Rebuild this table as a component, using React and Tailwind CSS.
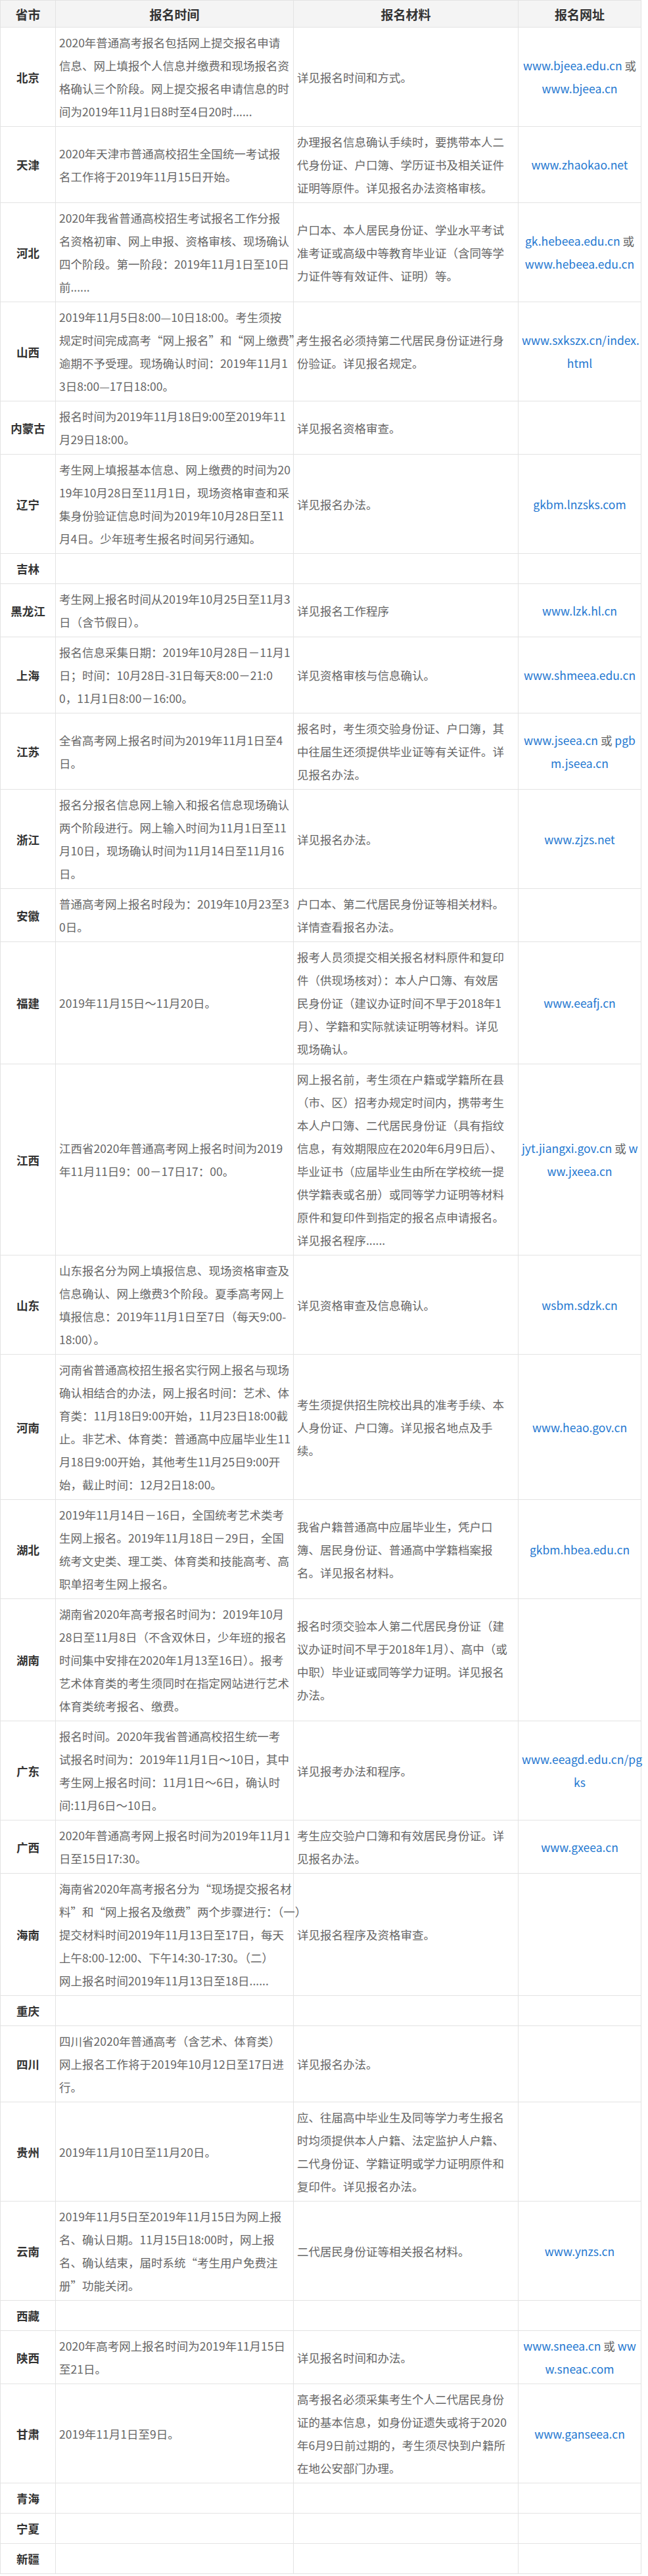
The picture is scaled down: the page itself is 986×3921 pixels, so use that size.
const rows = [
  {
    p: "北京",
    time: ["2020年普通高考报名包括网上提交报名申请", "信息、网上填报个人信息并缴费和现场报名资", "格确认三个阶段。网上提交报名申请信息的时", "间为2019年11月1日8时至4日20时......"],
    mat: ["详见报名时间和方式。"],
    url: ["www.bjeea.edu.cn 或", "www.bjeea.cn"],
  },
  {
    p: "天津",
    time: ["2020年天津市普通高校招生全国统一考试报", "名工作将于2019年11月15日开始。"],
    mat: ["办理报名信息确认手续时，要携带本人二", "代身份证、户口簿、学历证书及相关证件", "证明等原件。详见报名办法资格审核。"],
    url: ["www.zhaokao.net"],
  },
  {
    p: "河北",
    time: ["2020年我省普通高校招生考试报名工作分报", "名资格初审、网上申报、资格审核、现场确认", "四个阶段。第一阶段：2019年11月1日至10日", "前......"],
    mat: ["户口本、本人居民身份证、学业水平考试", "准考证或高级中等教育毕业证（含同等学", "力证件等有效证件、证明）等。"],
    url: ["gk.hebeea.edu.cn 或", "www.hebeea.edu.cn"],
  },
  {
    p: "山西",
    time: ["2019年11月5日8:00—10日18:00。考生须按", "规定时间完成高考“网上报名”和“网上缴费”，", "逾期不予受理。现场确认时间：2019年11月1", "3日8:00—17日18:00。"],
    mat: ["考生报名必须持第二代居民身份证进行身", "份验证。详见报名规定。"],
    url: ["www.sxkszx.cn/index.", "html"],
  },
  {
    p: "内蒙古",
    time: ["报名时间为2019年11月18日9:00至2019年11", "月29日18:00。"],
    mat: ["详见报名资格审查。"],
    url: [],
  },
  {
    p: "辽宁",
    time: ["考生网上填报基本信息、网上缴费的时间为20", "19年10月28日至11月1日，现场资格审查和采", "集身份验证信息时间为2019年10月28日至11", "月4日。少年班考生报名时间另行通知。"],
    mat: ["详见报名办法。"],
    url: ["gkbm.lnzsks.com"],
  },
  { p: "吉林", time: [], mat: [], url: [] },
  {
    p: "黑龙江",
    time: ["考生网上报名时间从2019年10月25日至11月3", "日（含节假日）。"],
    mat: ["详见报名工作程序"],
    url: ["www.lzk.hl.cn"],
  },
  {
    p: "上海",
    time: ["报名信息采集日期：2019年10月28日－11月1", "日；时间：10月28日-31日每天8:00－21:0", "0，11月1日8:00－16:00。"],
    mat: ["详见资格审核与信息确认。"],
    url: ["www.shmeea.edu.cn"],
  },
  {
    p: "江苏",
    time: ["全省高考网上报名时间为2019年11月1日至4", "日。"],
    mat: ["报名时，考生须交验身份证、户口簿，其", "中往届生还须提供毕业证等有关证件。详", "见报名办法。"],
    url: ["www.jseea.cn 或 pgb", "m.jseea.cn"],
  },
  {
    p: "浙江",
    time: ["报名分报名信息网上输入和报名信息现场确认", "两个阶段进行。网上输入时间为11月1日至11", "月10日，现场确认时间为11月14日至11月16", "日。"],
    mat: ["详见报名办法。"],
    url: ["www.zjzs.net"],
  },
  {
    p: "安徽",
    time: ["普通高考网上报名时段为：2019年10月23至3", "0日。"],
    mat: ["户口本、第二代居民身份证等相关材料。", "详情查看报名办法。"],
    url: [],
  },
  {
    p: "福建",
    time: ["2019年11月15日～11月20日。"],
    mat: ["报考人员须提交相关报名材料原件和复印", "件（供现场核对）：本人户口簿、有效居", "民身份证（建议办证时间不早于2018年1", "月）、学籍和实际就读证明等材料。详见", "现场确认。"],
    url: ["www.eeafj.cn"],
  },
  {
    p: "江西",
    time: ["江西省2020年普通高考网上报名时间为2019", "年11月11日9：00－17日17：00。"],
    mat: ["网上报名前，考生须在户籍或学籍所在县", "（市、区）招考办规定时间内，携带考生", "本人户口簿、二代居民身份证（具有指纹", "信息，有效期限应在2020年6月9日后）、", "毕业证书（应届毕业生由所在学校统一提", "供学籍表或名册）或同等学力证明等材料", "原件和复印件到指定的报名点申请报名。", "详见报名程序......"],
    url: ["jyt.jiangxi.gov.cn 或 w", "ww.jxeea.cn"],
  },
  {
    p: "山东",
    time: ["山东报名分为网上填报信息、现场资格审查及", "信息确认、网上缴费3个阶段。夏季高考网上", "填报信息：2019年11月1日至7日（每天9:00-", "18:00）。"],
    mat: ["详见资格审查及信息确认。"],
    url: ["wsbm.sdzk.cn"],
  },
  {
    p: "河南",
    time: ["河南省普通高校招生报名实行网上报名与现场", "确认相结合的办法，网上报名时间：艺术、体", "育类：11月18日9:00开始，11月23日18:00截", "止。非艺术、体育类：普通高中应届毕业生11", "月18日9:00开始，其他考生11月25日9:00开", "始，截止时间：12月2日18:00。"],
    mat: ["考生须提供招生院校出具的准考手续、本", "人身份证、户口簿。详见报名地点及手", "续。"],
    url: ["www.heao.gov.cn"],
  },
  {
    p: "湖北",
    time: ["2019年11月14日－16日，全国统考艺术类考", "生网上报名。2019年11月18日－29日，全国", "统考文史类、理工类、体育类和技能高考、高", "职单招考生网上报名。"],
    mat: ["我省户籍普通高中应届毕业生，凭户口", "簿、居民身份证、普通高中学籍档案报", "名。详见报名材料。"],
    url: ["gkbm.hbea.edu.cn"],
  },
  {
    p: "湖南",
    time: ["湖南省2020年高考报名时间为：2019年10月", "28日至11月8日（不含双休日，少年班的报名", "时间集中安排在2020年1月13至16日）。报考", "艺术体育类的考生须同时在指定网站进行艺术", "体育类统考报名、缴费。"],
    mat: ["报名时须交验本人第二代居民身份证（建", "议办证时间不早于2018年1月）、高中（或", "中职）毕业证或同等学力证明。详见报名", "办法。"],
    url: [],
  },
  {
    p: "广东",
    time: ["报名时间。2020年我省普通高校招生统一考", "试报名时间为：2019年11月1日～10日，其中", "考生网上报名时间：11月1日～6日，确认时", "间:11月6日～10日。"],
    mat: ["详见报考办法和程序。"],
    url: ["www.eeagd.edu.cn/pg", "ks"],
  },
  {
    p: "广西",
    time: ["2020年普通高考网上报名时间为2019年11月1", "日至15日17:30。"],
    mat: ["考生应交验户口簿和有效居民身份证。详", "见报名办法。"],
    url: ["www.gxeea.cn"],
  },
  {
    p: "海南",
    time: ["海南省2020年高考报名分为“现场提交报名材", "料”和“网上报名及缴费”两个步骤进行：（一）", "提交材料时间2019年11月13日至17日，每天", "上午8:00-12:00、下午14:30-17:30。（二）", "网上报名时间2019年11月13日至18日......"],
    mat: ["详见报名程序及资格审查。"],
    url: [],
  },
  { p: "重庆", time: [], mat: [], url: [] },
  {
    p: "四川",
    time: ["四川省2020年普通高考（含艺术、体育类）", "网上报名工作将于2019年10月12日至17日进", "行。"],
    mat: ["详见报名办法。"],
    url: [],
  },
  {
    p: "贵州",
    time: ["2019年11月10日至11月20日。"],
    mat: ["应、往届高中毕业生及同等学力考生报名", "时均须提供本人户籍、法定监护人户籍、", "二代身份证、学籍证明或学力证明原件和", "复印件。详见报名办法。"],
    url: [],
  },
  {
    p: "云南",
    time: ["2019年11月5日至2019年11月15日为网上报", "名、确认日期。11月15日18:00时，网上报", "名、确认结束，届时系统“考生用户免费注", "册”功能关闭。"],
    mat: ["二代居民身份证等相关报名材料。"],
    url: ["www.ynzs.cn"],
  },
  { p: "西藏", time: [], mat: [], url: [] },
  {
    p: "陕西",
    time: ["2020年高考网上报名时间为2019年11月15日", "至21日。"],
    mat: ["详见报名时间和办法。"],
    url: ["www.sneea.cn 或 ww", "w.sneac.com"],
  },
  {
    p: "甘肃",
    time: ["2019年11月1日至9日。"],
    mat: ["高考报名必须采集考生个人二代居民身份", "证的基本信息，如身份证遗失或将于2020", "年6月9日前过期的，考生须尽快到户籍所", "在地公安部门办理。"],
    url: ["www.ganseea.cn"],
  },
  { p: "青海", time: [], mat: [], url: [] },
  { p: "宁夏", time: [], mat: [], url: [] },
  { p: "新疆", time: [], mat: [], url: [] },
];

const Lines = ({ lines }) =>
  lines.map((l, i) => (
    <div key={i} className="whitespace-nowrap">
      {l}
    </div>
  ));

// 网址列: "或" 用灰色，其余为蓝色链接
const UrlLines = ({ lines }) =>
  lines.map((l, i) => (
    <div key={i} className="whitespace-nowrap">
      {l.split(/(或)/).map((s, j) =>
        s === "或" ? (
          <span key={j} className="text-[#666]">或</span>
        ) : (
          <a key={j} className="text-[#1f78d1]">{s}</a>
        )
      )}
    </div>
  ));

const th = "border border-[#e3e3e3] bg-[#f4f4f4] text-[#333] font-bold text-[19px] h-[41px] text-center align-middle";
const td = "border border-[#e3e3e3] px-[5px] py-[5px] align-middle";

export default function App() {
  return (
    <div
      className="w-[986px] bg-white pb-[5px] text-[17.5px] leading-[35px] text-[#666]"
      style={{ fontFamily: '"Microsoft YaHei", "Noto Sans CJK SC", "Noto Sans", sans-serif' }}
    >
      <table className="w-[975px] table-fixed border-collapse">
        <colgroup>
          <col className="w-[84px]" />
          <col className="w-[362px]" />
          <col className="w-[342px]" />
          <col className="w-[187px]" />
        </colgroup>
        <thead>
          <tr>
            <th className={th}>省市</th>
            <th className={th}>报名时间</th>
            <th className={th}>报名材料</th>
            <th className={th}>报名网址</th>
          </tr>
        </thead>
        <tbody>
          {rows.map((r) => (
            <tr key={r.p}>
              <td className={`${td} text-center font-bold text-[#333] whitespace-nowrap px-0`}>{r.p}</td>
              <td className={td}>
                <Lines lines={r.time} />
              </td>
              <td className={td}>
                <Lines lines={r.mat} />
              </td>
              <td className={`${td} text-center`}>
                <UrlLines lines={r.url} />
              </td>
            </tr>
          ))}
        </tbody>
      </table>
    </div>
  );
}
